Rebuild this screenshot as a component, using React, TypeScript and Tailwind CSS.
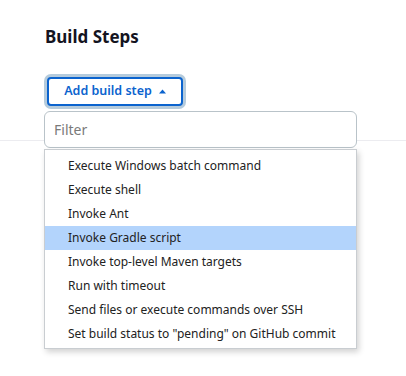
import { useState } from "react";

const steps = [
  "Execute Windows batch command",
  "Execute shell",
  "Invoke Ant",
  "Invoke Gradle script",
  "Invoke top-level Maven targets",
  "Run with timeout",
  "Send files or execute commands over SSH",
  'Set build status to "pending" on GitHub commit',
];

export default function App() {
  const [active] = useState(3);

  return (
    <div className="relative w-[406px] h-[376px] bg-white overflow-hidden font-['Noto_Sans','Liberation_Sans',sans-serif] text-[#1f2328]">
      {/* faint section divider behind the menu */}
      <div className="absolute left-0 right-0 top-[140px] h-px bg-[#ececf0]" />

      <div className="relative pl-[44px] pt-[24px]">
        <h2 className="pl-[1px] text-[17px] leading-[26px] font-bold text-[#14141f]">Build Steps</h2>

        {/* Add build step button */}
        <div className="mt-[27px] pl-[3px]">
          <button className="flex items-center gap-[7px] h-[29px] w-[136px] justify-center rounded-[4px] border-2 border-[#0b63ce] bg-white ring-[3px] ring-[#b5cbdc] text-[12.5px] font-semibold text-[#0b63ce]">
            <span>Add build step</span>
            <svg width="7" height="5" viewBox="0 0 7 5" className="mt-[-1px]">
              <path d="M0 4.5 L3.5 0.5 L7 4.5 Z" fill="#0b63ce" />
            </svg>
          </button>
        </div>

        {/* Filter + menu */}
        <div className="mt-[5px] w-[313px]">
          <div className="h-[37px] rounded-[6px] border border-[#b9c3c9] bg-white flex items-center px-[9px]">
            <span className="text-[14px] text-[#7a7a7a]">Filter</span>
          </div>
          <ul className="mt-px border border-[#c9cdd1] bg-white pt-[4px] pb-[2px] shadow-[2px_3px_6px_rgba(0,0,0,0.18)]">
            {steps.map((s, i) => (
              <li
                key={s}
                className={
                  "h-[24px] flex items-center pl-[23px] text-[12px] whitespace-nowrap text-[#222] " +
                  (i === active ? "bg-[#b3d4fc]" : "")
                }
              >
                {s}
              </li>
            ))}
          </ul>
        </div>
      </div>
    </div>
  );
}
